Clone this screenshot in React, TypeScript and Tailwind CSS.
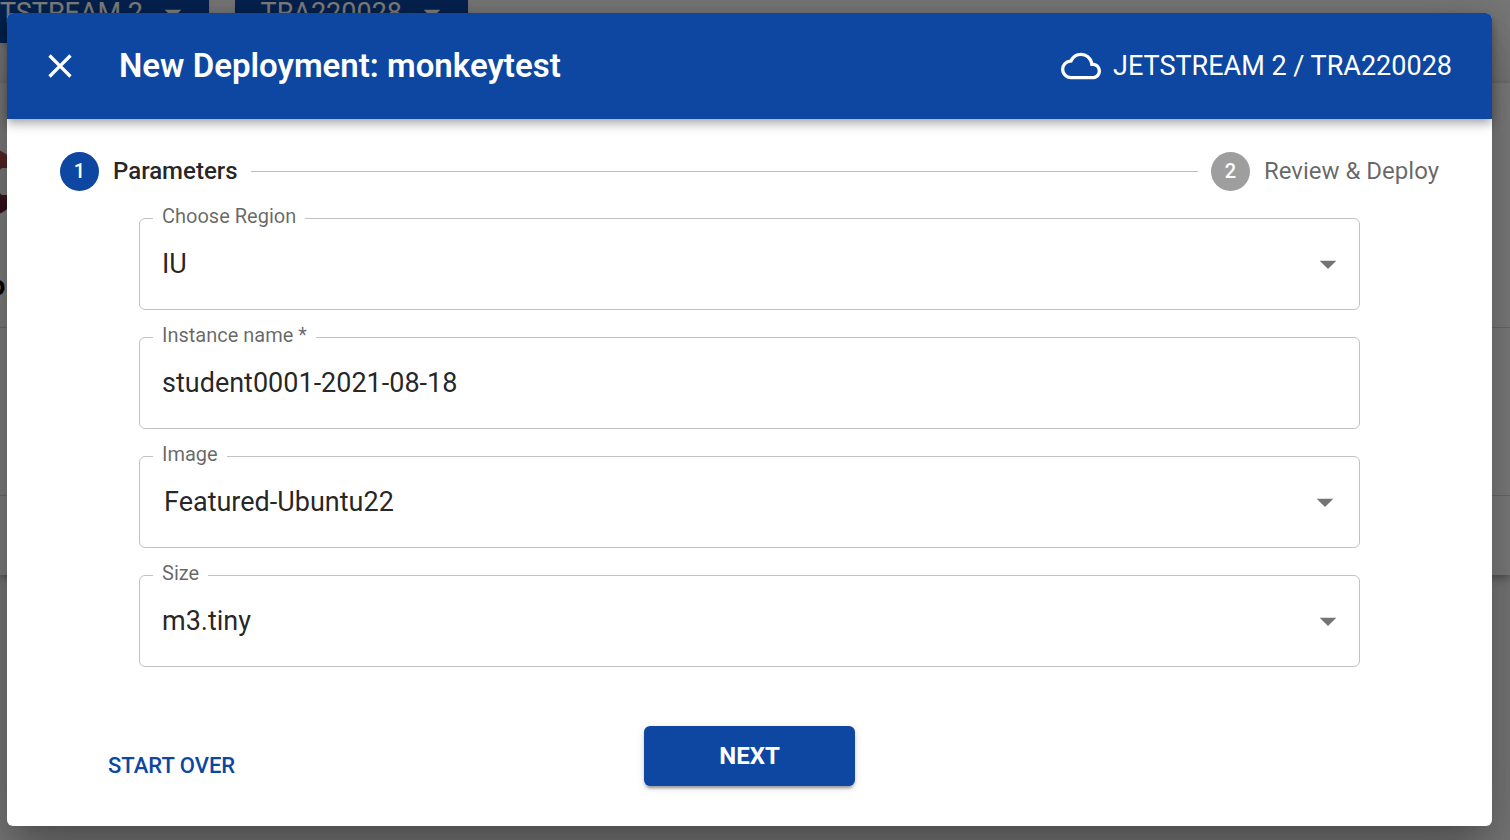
import React, { ReactNode } from "react";
import { MdArrowDropDown, MdClose, MdOutlineCloud } from "react-icons/md";

function PageBehind() {
  return (
    <div
      aria-hidden="true"
      className="absolute inset-0 flex flex-col overflow-hidden bg-[#f0f0f0] text-[27px] text-white"
    >
      <div className="flex h-[83px] shrink-0 items-start gap-[26px]">
        <div className="flex h-[43px] w-[209px] items-start justify-end bg-[#0d47a1] pr-4 leading-[26px] shadow-md">
          <span className="whitespace-nowrap">JETSTREAM 2</span>
          <MdArrowDropDown className="-mt-[7px] ml-2.5 size-10 shrink-0" />
        </div>
        <div className="flex h-[43px] w-[233px] items-start justify-end bg-[#0d47a1] pr-4 leading-[26px] shadow-md">
          <span>TRA220028</span>
          <MdArrowDropDown className="-mt-[7px] ml-2.5 size-10 shrink-0" />
        </div>
      </div>
      <div className="flex h-[492px] shrink-0 flex-col bg-[#fafafa] shadow-[0_3px_8px_0_rgba(0,0,0,0.35)]">
        <div className="h-[245px] border-b border-[#d4d4d4] pt-[67px] text-black">
          <svg className="h-16 w-8" viewBox="0 0 32 64">
            <defs>
              <linearGradient id="badge" x1="0" y1="0" x2="0" y2="1">
                <stop offset="0" stopColor="#c0584c" />
                <stop offset="1" stopColor="#5c1834" />
              </linearGradient>
            </defs>
            <circle cx="-15" cy="32" r="35" fill="url(#badge)" />
            <rect x="0" y="18" width="24" height="27" rx="3" fill="#f5f5f5" />
          </svg>
          <div className="mt-[55px] flex leading-[34px]">
            <span className="-ml-2.5 font-bold">o</span>
          </div>
        </div>
        <div className="h-[168px] border-b border-[#d4d4d4]" />
      </div>
    </div>
  );
}

function Step({ number, label, active = false }: { number: number; label: string; active?: boolean }) {
  return (
    <li className="flex items-center gap-[14px]" aria-current={active ? "step" : undefined}>
      <span
        className={
          active
            ? "flex size-[39px] items-center justify-center rounded-full bg-[#0d47a1] text-[20px] font-medium text-white"
            : "flex size-[39px] items-center justify-center rounded-full bg-[#9e9e9e] text-[20px] font-medium text-white"
        }
      >
        {number}
      </span>
      <span className={active ? "text-[24px] font-medium text-black/87" : "text-[24px] text-black/60"}>
        {label}
      </span>
    </li>
  );
}

function Field({ id, label, children }: { id: string; label: string; children: ReactNode }) {
  return (
    <div className="relative h-[92px] rounded-md border border-[#c2c2c2]">
      <label
        htmlFor={id}
        className="absolute -top-4 left-[13px] bg-white px-[9px] text-[20px] leading-[26px] text-black/60"
      >
        {label}
      </label>
      {children}
    </div>
  );
}

function SelectField({
  id,
  label,
  value,
  searchable = false,
}: {
  id: string;
  label: string;
  value: string;
  searchable?: boolean;
}) {
  return (
    <Field id={id} label={label}>
      <select
        id={id}
        className={
          searchable
            ? "size-full appearance-none rounded-md bg-transparent pl-6 text-[27px] text-black/87 outline-none"
            : "size-full appearance-none rounded-md bg-transparent pl-[22px] text-[27px] text-black/87 outline-none"
        }
      >
        <option>{value}</option>
      </select>
      <MdArrowDropDown
        className={
          searchable
            ? "pointer-events-none absolute right-[14px] top-[25px] size-10 text-black/54"
            : "pointer-events-none absolute right-[11px] top-[25px] size-10 text-black/54"
        }
      />
    </Field>
  );
}

export default function App() {
  return (
    <div className="relative flex min-h-screen flex-col overflow-hidden font-[Roboto,sans-serif]">
      <PageBehind />
      <div className="relative flex flex-1 flex-col bg-black/50 pt-[13px] pr-[18px] pb-[14px] pl-[7px]">
        <div
          role="dialog"
          aria-labelledby="dialog-title"
          className="flex flex-1 flex-col rounded-md bg-white shadow-[0_18px_25px_-12px_rgba(0,0,0,0.2),0_40px_63px_5px_rgba(0,0,0,0.14),0_15px_76px_13px_rgba(0,0,0,0.12)]"
        >
          <header className="flex h-[106px] items-center justify-between rounded-t-md bg-[#0d47a1] pr-10 pl-[33px] text-white shadow-[0_3px_7px_-2px_rgba(0,0,0,0.2),0_7px_8px_0_rgba(0,0,0,0.14),0_2px_17px_0_rgba(0,0,0,0.12)]">
            <div className="flex items-center gap-[39px]">
              <button type="button" aria-label="Close">
                <MdClose className="size-10" />
              </button>
              <h1 id="dialog-title" className="text-[33px] font-semibold">
                New Deployment: monkeytest
              </h1>
            </div>
            <div className="flex items-center gap-3 text-[27px]">
              <MdOutlineCloud className="size-10" />
              <span>JETSTREAM 2 / TRA220028</span>
            </div>
          </header>

          <main className="flex flex-1 flex-col pt-8 pb-10">
            <ol className="flex h-10 items-center gap-[13px] px-[53px]">
              <Step number={1} label="Parameters" active />
              <li aria-hidden="true" className="h-px flex-1 bg-[#bdbdbd]" />
              <Step number={2} label="Review &amp; Deploy" />
            </ol>

            <form className="flex flex-1 flex-col" onSubmit={(event) => event.preventDefault()}>
              <div className="flex flex-col gap-[27px] px-[132px] pt-[27px]">
                <SelectField id="region" label="Choose Region" value="IU" />
                <Field id="instance-name" label="Instance name *">
                  <input
                    id="instance-name"
                    type="text"
                    defaultValue="student0001-2021-08-18"
                    className="size-full rounded-md bg-transparent px-[22px] text-[27px] text-black/87 outline-none"
                  />
                </Field>
                <SelectField id="image" label="Image" value="Featured-Ubuntu22" searchable />
                <SelectField id="size" label="Size" value="m3.tiny" />
              </div>

              <div className="mt-auto grid grid-cols-3 items-end pt-10">
                <button
                  type="button"
                  className="ml-[88px] h-[42px] justify-self-start px-[13px] text-[22px] font-medium text-[#0d47a1]"
                >
                  START OVER
                </button>
                <button
                  type="submit"
                  className="h-[60px] w-[211px] justify-self-center rounded-md bg-[#0d47a1] text-[24px] font-bold text-white shadow-[0_5px_2px_-3px_rgba(0,0,0,0.2),0_3px_3px_0_rgba(0,0,0,0.14),0_2px_8px_0_rgba(0,0,0,0.12)]"
                >
                  NEXT
                </button>
              </div>
            </form>
          </main>
        </div>
      </div>
    </div>
  );
}
